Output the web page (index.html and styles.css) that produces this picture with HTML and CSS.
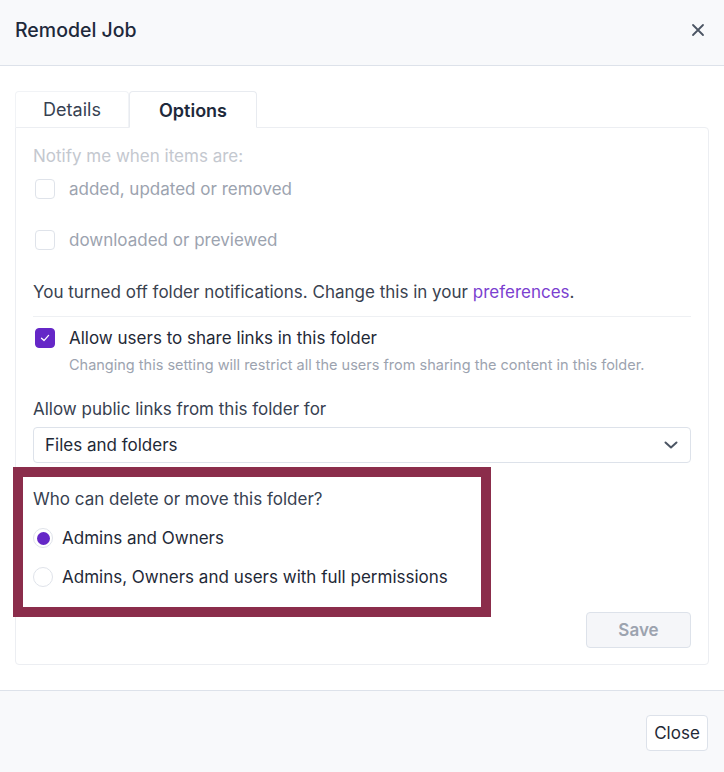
FILE: index.html
```html
<!DOCTYPE html>
<html lang="en">
<head>
<meta charset="utf-8">
<title>Remodel Job</title>
<link rel="stylesheet" href="styles.css">
</head>
<body>
<div class="modal">
  <header class="modal-header">
    <h1 class="modal-title">Remodel Job</h1>
    <button class="icon-close" aria-label="Close">
      <svg width="14" height="14" viewBox="0 0 14 14"><path d="M2 2L12 12M12 2L2 12" stroke="#4b5563" stroke-width="1.8" stroke-linecap="round"/></svg>
    </button>
  </header>
  <main class="modal-body">
    <nav class="tabs">
      <div class="tab">Details</div>
      <div class="tab active">Options</div>
    </nav>
    <section class="panel">
      <p class="muted-label">Notify me when items are:</p>
      <label class="check-row disabled row-first">
        <span class="box"></span>
        <span>added, updated or removed</span>
      </label>
      <label class="check-row disabled row-second">
        <span class="box"></span>
        <span>downloaded or previewed</span>
      </label>
      <p class="notice">You turned off folder notifications. Change this in your <a class="link">preferences</a>.</p>
      <hr class="sep">
      <label class="check-row checked-row">
        <span class="box checked">
          <svg width="12" height="12" viewBox="0 0 12 12"><path d="M2.5 6.3L5 8.6L9.6 3.4" fill="none" stroke="#fff" stroke-width="1.3" stroke-linecap="round" stroke-linejoin="round"/></svg>
        </span>
        <span>Allow users to share links in this folder</span>
      </label>
      <p class="hint">Changing this setting will restrict all the users from sharing the content in this folder.</p>
      <p class="field-label">Allow public links from this folder for</p>
      <div class="select">
        <span>Files and folders</span>
        <svg width="16" height="16" viewBox="0 0 16 16"><path d="M2.5 5.5L8 10.5L13.5 5.5" fill="none" stroke="#4b5563" stroke-width="2" stroke-linecap="round" stroke-linejoin="round"/></svg>
      </div>
      <div class="delete-section">
        <p class="field-label">Who can delete or move this folder?</p>
        <label class="radio-row first-radio">
          <span class="radio on"><span class="dot"></span></span>
          <span>Admins and Owners</span>
        </label>
        <label class="radio-row">
          <span class="radio"></span>
          <span>Admins, Owners and users with full permissions</span>
        </label>
        <div class="annotation"></div>
      </div>
      <div class="actions">
        <button class="btn-save">Save</button>
      </div>
    </section>
  </main>
  <footer class="modal-footer">
    <button class="btn-close">Close</button>
  </footer>
</div>
</body>
</html>
```
FILE: styles.css
```css
* { box-sizing: border-box; }
html, body { margin: 0; padding: 0; background: #fff; }
body {
  font-family: Inter, "Noto Sans", sans-serif;
  font-size: 17px;
  color: #374151;
  width: 724px;
  height: 772px;
  overflow: hidden;
}
p { margin: 0; }
.modal { display: flex; flex-direction: column; height: 772px; }
.modal-header {
  height: 66px;
  background: #f8f9fb;
  border-bottom: 1px solid #dde2ea;
  display: flex;
  align-items: center;
  justify-content: space-between;
  padding: 0 19px 0 15px;
}
.modal-title {
  margin: 0;
  font-size: 19.5px;
  font-weight: 500;
  color: #1e293b;
  line-height: 24px;
  margin-top: -6px;
}
.icon-close {
  border: 0; background: transparent; padding: 0; width: 14px; height: 14px;
  display: flex; margin-top: -6px;
}
.modal-body { padding: 25px 15px 25px 15px; flex: 1; }
.tabs { display: flex; height: 36px; }
.tab {
  font-size: 18px;
  line-height: 35px;
  color: #374151;
  padding: 0;
  width: 114px;
  text-align: center;
  border: 1px solid #f1f3f6;
  border-bottom: 0;
  border-radius: 4px 4px 0 0;
}
.tab.active {
  width: 128px;
  font-weight: 600;
  color: #1e293b;
  background: #fff;
  border: 1px solid #e8ebf0;
  border-bottom: 1px solid #fff;
  margin-bottom: -1px;
  height: 37px;
  position: relative;
  z-index: 1;
  line-height: 37px;
}
.panel {
  border: 1px solid #eceef2;
  border-radius: 0 4px 4px 4px;
  padding: 16px 17px 16px 17px;
}
.muted-label { line-height: 24px; color: #c4c8cf; }
.check-row { display: flex; align-items: center; gap: 14px; line-height: 24px; padding-left: 2px; }
.row-first { margin-top: 9px; }
.row-second { margin-top: 27px; }
.check-row.disabled { color: #9ca3af; }
.box {
  width: 20px; height: 20px; flex: none;
  border: 1px solid #dfe3ea; border-radius: 4px; background: #fff;
  display: flex; align-items: center; justify-content: center;
}
.box.checked { background: #6527c7; border-color: #6527c7; }
.notice { margin-top: 28px; line-height: 24px; color: #3a4250; }
.link { color: #7b3fd0; text-decoration: none; }
.sep { border: 0; border-top: 1px solid #eef0f3; margin: 12px 0 0 0; height: 0; }
.checked-row { margin-top: 9px; color: #1f2937; }
.hint { font-size: 14.5px; line-height: 18px; color: #9ca3af; margin-top: 6px; padding-left: 36px; }
.field-label { line-height: 24px; color: #374151; margin-top: 23px; }
.select {
  margin-top: 6px; height: 36px;
  border: 1px solid #dde2ea; border-radius: 4px;
  display: flex; align-items: center; justify-content: space-between;
  padding: 0 11px 0 11px; color: #1f2937;
}
.delete-section { position: relative; margin-top: 24px; }
.delete-section .field-label { margin-top: 0; }
.radio-row { display: flex; align-items: center; gap: 9px; line-height: 24px; margin-top: 15px; color: #1f2937; }
.radio {
  width: 20px; height: 20px; border-radius: 50%; flex: none;
  border: 1px solid #dfe3ea; background: #fff;
  display: flex; align-items: center; justify-content: center;
}
.radio .dot { width: 13px; height: 13px; border-radius: 50%; background: #6527c7; }
.annotation {
  position: absolute;
  left: -20px; top: -20px;
  width: 478px; height: 150px;
  border: 10px solid #8b2d4b;
  pointer-events: none;
}
.actions { display: flex; justify-content: flex-end; margin-top: 23px; }
.btn-save {
  width: 105px; height: 36px;
  background: #f5f6f9; border: 1px solid #dde2ea; border-radius: 4px;
  font-family: inherit; font-size: 17px; font-weight: 600; color: #9ca3af;
}
.modal-footer {
  height: 82px;
  background: #f8f9fb;
  border-top: 1px solid #dde2ea;
  display: flex; justify-content: flex-end; align-items: flex-start;
  padding: 24px 16px 0 0;
}
.btn-close {
  width: 62px; height: 36px;
  background: #fff; border: 1px solid #dde2ea; border-radius: 4px;
  font-family: inherit; font-size: 17px; color: #1f2937; padding: 0;
}
```
